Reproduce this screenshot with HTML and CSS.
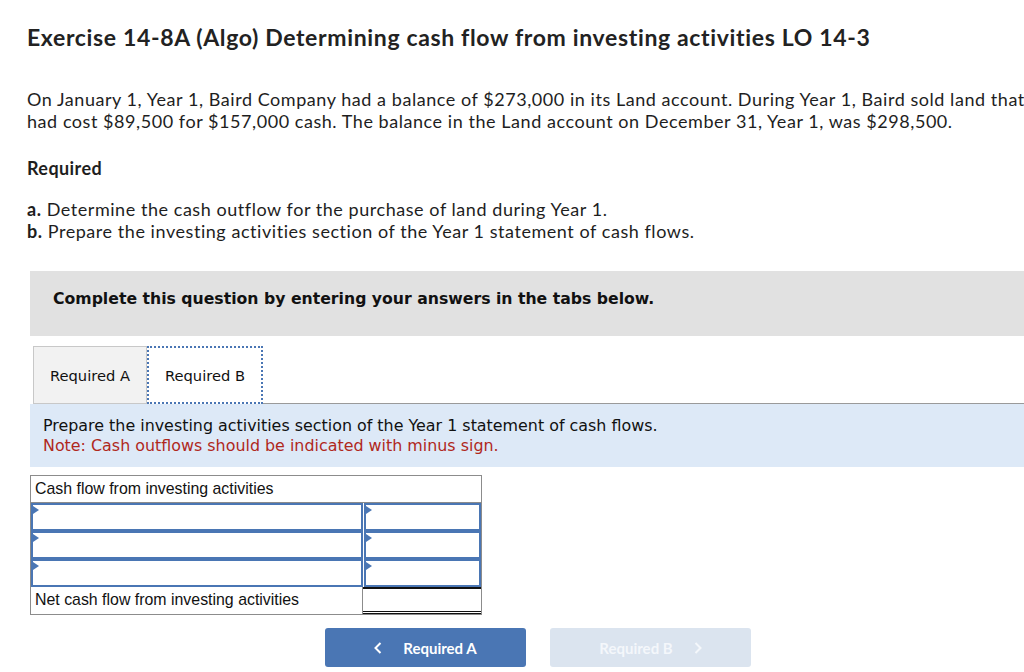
FILE: index.html
```html
<!DOCTYPE html>
<html>
<head>
<meta charset="utf-8">
<link rel="stylesheet" href="styles.css">
</head>
<body>
<div class="page">
  <h1 class="title">Exercise 14-8A (Algo) Determining cash flow from investing activities LO 14-3</h1>
  <p class="intro">On January 1, Year 1, Baird Company had a balance of $273,000 in its Land account. During Year 1, Baird sold land that had cost $89,500 for $157,000 cash. The balance in the Land account on December 31, Year 1, was $298,500.</p>
  <h2 class="req-head">Required</h2>
  <ol class="req-list">
    <li><b>a.</b> Determine the cash outflow for the purchase of land during Year 1.</li>
    <li><b>b.</b> Prepare the investing activities section of the Year 1 statement of cash flows.</li>
  </ol>

  <div class="work">
    <div class="banner">Complete this question by entering your answers in the tabs below.</div>
    <div class="tabs">
      <div class="tab">Required A</div>
      <div class="tab tab-active">Required B</div>
      <div class="tab-rest"></div>
    </div>
    <div class="instructions">
      <div>Prepare the investing activities section of the Year 1 statement of cash flows.</div>
      <div class="note">Note: Cash outflows should be indicated with minus sign.</div>
    </div>
    <div class="sheet">
      <div class="cell head">Cash flow from investing activities</div>
      <div class="cell input"><span class="flag"></span></div>
      <div class="cell input amt"><span class="flag"></span></div>
      <div class="cell input"><span class="flag"></span></div>
      <div class="cell input amt"><span class="flag"></span></div>
      <div class="cell input"><span class="flag"></span></div>
      <div class="cell input amt"><span class="flag"></span></div>
      <div class="cell label">Net cash flow from investing activities</div>
      <div class="cell total"></div>
    </div>
    <div class="nav">
      <div class="btn btn-prev"><svg class="chev chev-l" width="8" height="12" viewBox="0 0 8 12"><polyline points="6.5,1 1.5,6 6.5,11" fill="none" stroke="currentColor" stroke-width="2"/></svg>Required A</div>
      <div class="btn btn-next">Required B<svg class="chev chev-r" width="8" height="12" viewBox="0 0 8 12"><polyline points="1.5,1 6.5,6 1.5,11" fill="none" stroke="currentColor" stroke-width="2"/></svg></div>
    </div>
  </div>
</div>
</body>
</html>
```

FILE: styles.css
```css
html, body {
  margin: 0;
  padding: 0;
  overflow: hidden;
  background: #fff;
}
.page {
  width: 1020px;
  padding: 0 0 0 27px;
  font-family: Lato, "Open Sans", sans-serif;
  color: #1e1e1e;
}
.title {
  margin: 0;
  padding-top: 23px;
  font-size: 23px;
  line-height: 28px;
  font-weight: 700;
  letter-spacing: 0.65px;
  color: #222;
}
.intro {
  margin: 37px 0 0;
  font-size: 18px;
  line-height: 22px;
  letter-spacing: 0.55px;
}
.req-head {
  margin: 25px 0 0;
  font-size: 18px;
  line-height: 22px;
  font-weight: 700;
  letter-spacing: 0.4px;
}
.req-list {
  list-style: none;
  margin: 19px 0 0;
  padding: 0;
  font-size: 18px;
  line-height: 22px;
  letter-spacing: 0.55px;
}
.req-list b { font-weight: 700; }
.work {
  margin-left: 3px;
  width: 1016px;
  margin-top: 29px;
  font-family: "DejaVu Sans", Verdana, sans-serif;
}
.banner {
  background: #e1e1e1;
  height: 65px;
  box-sizing: border-box;
  padding: 18px 0 0 23px;
  font-size: 15.7px;
  font-weight: 700;
  color: #111;
}
.tabs {
  display: flex;
  margin-top: 10px;
  height: 58px;
}
.tab {
  box-sizing: border-box;
  width: 114px;
  height: 58px;
  display: flex;
  align-items: center;
  justify-content: center;
  font-size: 14.7px;
  color: #111;
  background: #f2f2f2;
  border: 1px solid #c8c8c8;
  margin-left: 3px;
}
.tab-active {
  width: 116px;
  margin-left: 0;
  background: #fff;
  border: 2px dotted #4a76b4;
}
.tab-rest {
  flex: 1;
  border-bottom: 1px solid #9a9a9a;
}
.instructions {
  background: #dde9f7;
  height: 63px;
  box-sizing: border-box;
  padding: 12px 0 0 13px;
  font-size: 15.9px;
  line-height: 20px;
  color: #111;
}
.note { color: #b0281c; }
.sheet {
  margin-top: 8px;
  width: 452px;
  box-sizing: border-box;
  border: 1px solid #8c8c8c;
  display: grid;
  grid-template-columns: 332px 118px;
  grid-template-rows: 27px 28px 28px 28px 27px;
  font-family: "Liberation Sans", Arial, sans-serif;
  font-size: 15.9px;
  color: #111;
}
.cell {
  box-sizing: border-box;
  position: relative;
}
.head {
  grid-column: 1 / 3;
  padding: 4px 0 0 4px;
  border-bottom: 1px solid #8c8c8c;
}
.input {
  border: 2px solid #4a76b4;
  background: #fff;
}
.input.amt { margin-left: 1px; }
.flag {
  position: absolute;
  left: 0;
  top: 1px;
  width: 0;
  height: 0;
  border-top: 4px solid transparent;
  border-bottom: 4px solid transparent;
  border-left: 6px solid #4a76b4;
}
.label {
  padding: 4px 0 0 4px;
  border-right: 1px solid #8c8c8c;
}
.total {
  border-top: 2px solid #111;
  border-bottom: 3px double #111;
}
.nav {
  display: flex;
  justify-content: center;
  gap: 24px;
  margin-top: 13px;
  font-family: Lato, "Open Sans", sans-serif;
}
.btn {
  width: 201px;
  height: 39px;
  border-radius: 3px;
  display: flex;
  align-items: center;
  justify-content: center;
  font-size: 15px;
  font-weight: 700;
  color: #fff;
}
.btn-prev { background: #4a76b4; }
.btn-next { background: #dbe4ef; color: #f4f7fb; }
.chev { display: block; }
.chev-l { margin-right: 21px; }
.chev-r { margin-left: 21px; }
```
